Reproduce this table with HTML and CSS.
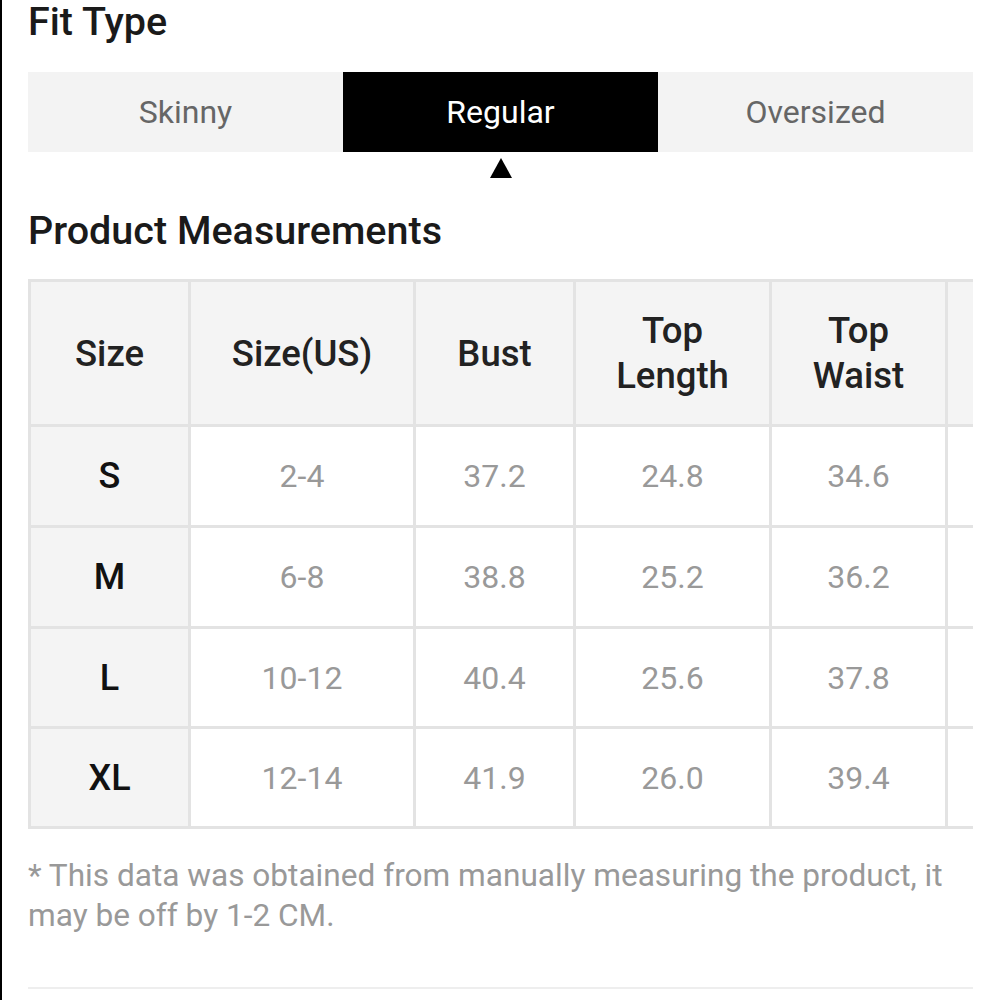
FILE: index.html
```html
<!DOCTYPE html>
<html>
<head>
<meta charset="utf-8">
<link rel="stylesheet" href="styles.css">
</head>
<body>
<div class="page">
  <h2 class="title">Fit Type</h2>
  <div class="tabs">
    <div class="tab">Skinny</div>
    <div class="tab active">Regular</div>
    <div class="tab">Oversized</div>
  </div>
  <div class="pointer-row"><span class="pointer"></span></div>
  <h2 class="title title-measure">Product Measurements</h2>
  <div class="table-wrap">
    <div class="grid">
      <div class="cell head">Size</div>
      <div class="cell head">Size(US)</div>
      <div class="cell head">Bust</div>
      <div class="cell head">Top<br>Length</div>
      <div class="cell head">Top<br>Waist</div>
      <div class="cell head"></div>

      <div class="cell size">S</div>
      <div class="cell val">2-4</div>
      <div class="cell val">37.2</div>
      <div class="cell val">24.8</div>
      <div class="cell val">34.6</div>
      <div class="cell val"></div>

      <div class="cell size">M</div>
      <div class="cell val">6-8</div>
      <div class="cell val">38.8</div>
      <div class="cell val">25.2</div>
      <div class="cell val">36.2</div>
      <div class="cell val"></div>

      <div class="cell size">L</div>
      <div class="cell val">10-12</div>
      <div class="cell val">40.4</div>
      <div class="cell val">25.6</div>
      <div class="cell val">37.8</div>
      <div class="cell val"></div>

      <div class="cell size">XL</div>
      <div class="cell val">12-14</div>
      <div class="cell val">41.9</div>
      <div class="cell val">26.0</div>
      <div class="cell val">39.4</div>
      <div class="cell val"></div>
    </div>
  </div>
  <p class="note">* This data was obtained from manually measuring the product, it may be off by 1-2 CM.</p>
  <div class="divider"></div>
</div>
</body>
</html>
```

FILE: styles.css
```css
html, body {
  margin: 0;
  padding: 0;
  background: #ffffff;
}
body {
  font-family: Roboto, "Liberation Sans", sans-serif;
  border-left: 2px solid #000;
  min-height: 1000px;
  box-sizing: border-box;
  overflow: hidden;
}
.page {
  padding: 0 27px 0 26px;
  height: 1000px;
  box-sizing: border-box;
}
.title {
  margin: 0;
  font-size: 39.5px;
  font-weight: 500;
  color: #1a1a1a;
  line-height: 44px;
  height: 44px;
  white-space: nowrap;
}
.tabs {
  display: flex;
  margin-top: 28px;
  height: 80px;
}
.tab {
  flex: 1;
  background: #f3f3f3;
  color: #666;
  font-size: 32px;
  display: flex;
  align-items: center;
  justify-content: center;
  padding-bottom: 1px;
}
.tab.active {
  background: #000;
  color: #fff;
}
.pointer-row {
  display: flex;
  justify-content: center;
  padding-top: 6px;
  height: 22px;
}
.pointer {
  width: 0;
  height: 0;
  border-left: 11px solid transparent;
  border-right: 11px solid transparent;
  border-bottom: 20px solid #000;
  margin-left: 1px;
}
.title-measure {
  margin-top: 29px;
}
.table-wrap {
  margin-top: 26px;
  width: 945px;
  overflow: hidden;
}
.grid {
  display: grid;
  grid-template-columns: 157px 222px 157px 193px 173px 160px;
  grid-template-rows: 142px 98px 98px 97px 97px;
  gap: 3px;
  padding: 3px 0 3px 3px;
  background: #e3e3e3;
  width: max-content;
}
.cell {
  display: flex;
  align-items: center;
  justify-content: center;
  text-align: center;
  background: #fff;
}
.head {
  background: #f4f4f4;
  color: #222;
  font-size: 36.5px;
  font-weight: 500;
  line-height: 45px;
}
.size {
  background: #f4f4f4;
  color: #111;
  font-size: 36px;
  font-weight: 500;
}
.val {
  color: #999;
  font-size: 32px;
}
.note {
  margin: 27px 0 0 0;
  color: #999;
  font-size: 31.6px;
  line-height: 40px;
}
.divider {
  margin-top: 51px;
  height: 2px;
  background: #eeeeee;
}
```
